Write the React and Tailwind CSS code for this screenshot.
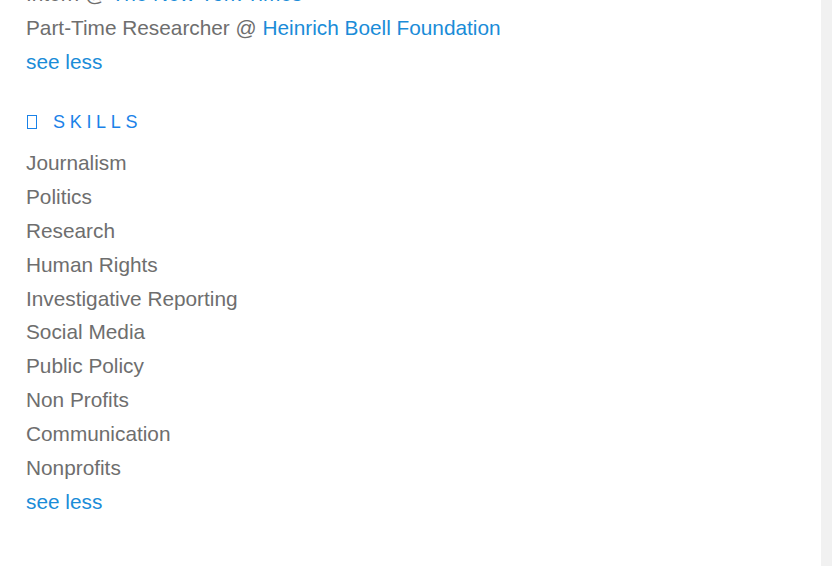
import React from 'react'

const skills = [
  'Journalism',
  'Politics',
  'Research',
  'Human Rights',
  'Investigative Reporting',
  'Social Media',
  'Public Policy',
  'Non Profits',
  'Communication',
  'Nonprofits',
]

export default function App() {
  return (
    <div className="flex h-[566px] w-[832px] overflow-hidden bg-white font-['Liberation_Sans',Arial,sans-serif] text-[20.8px] leading-[34px] text-[#6e6e6e]">
      <main className="flex-1 pl-[26px] -mt-[23px]">
        {/* Experience */}
        <div>
          Intern @ <a className="text-[#1a8cd8]">The New York Times</a>
        </div>
        <div>
          Part-Time Researcher @ <a className="text-[#1a8cd8]">Heinrich Boell Foundation</a>
        </div>
        <a className="block text-[#1a8cd8]">see less</a>

        {/* Skills */}
        <h2 className="mt-[28px] mb-[9px] flex h-[30px] items-center text-[18px] leading-[30px] font-normal tracking-[4.7px] text-[#1a82e8]">
          <span className="ml-[1px] mr-[16px] h-[14px] w-[10px] border-[1.5px] border-[#1a82e8]"></span>
          SKILLS
        </h2>
        <ul className="leading-[33.88px]">
          {skills.map((skill) => (
            <li key={skill}>{skill}</li>
          ))}
          <li>
            <a className="text-[#1a8cd8]">see less</a>
          </li>
        </ul>
      </main>
      <div className="w-[11px] bg-[#f1f1f1]"></div>
    </div>
  )
}
